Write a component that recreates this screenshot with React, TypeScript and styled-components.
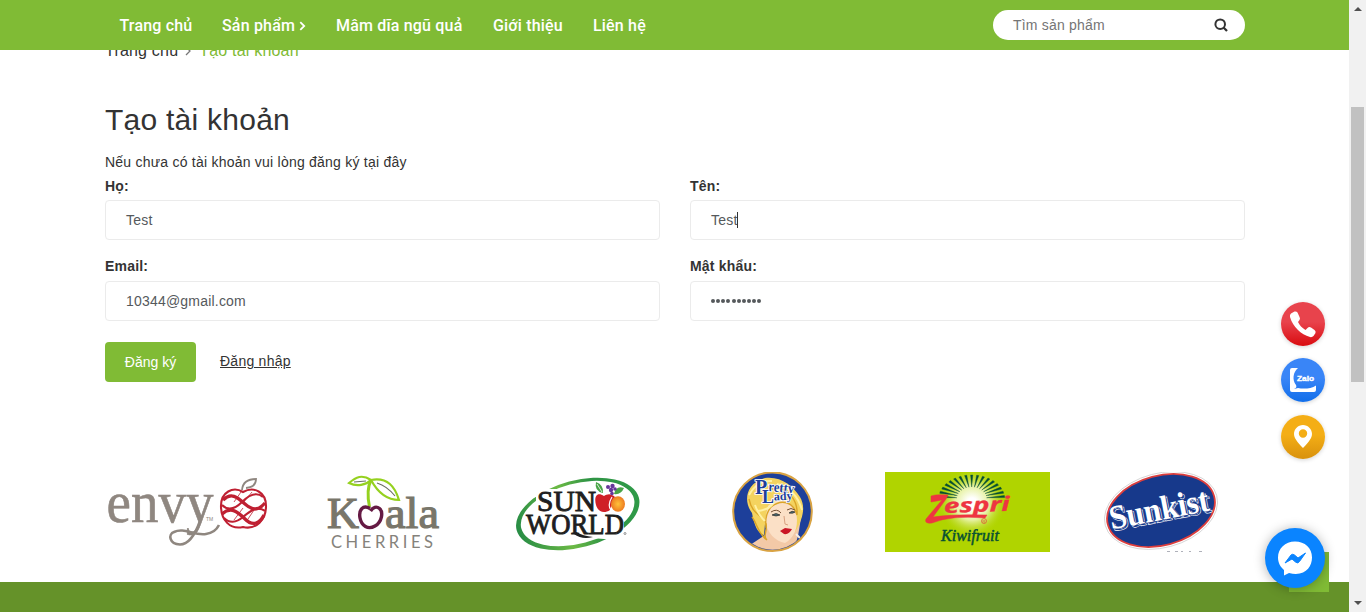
import React from "react";
import styled, { createGlobalStyle } from "styled-components";

const GREEN = "#80bb35";
const SANS = '"Liberation Sans", Arial, sans-serif';
const ROBOTO = 'Roboto, "Liberation Sans", sans-serif';
const SERIF = '"Liberation Serif", "Times New Roman", serif';

const GlobalStyle = createGlobalStyle`
  *, *::before, *::after { box-sizing: border-box; }
  body { margin: 0; overflow: hidden; background: #fff; color: #333; font-family: ${SANS}; font-size: 14px; }
  h1, p { margin: 0; }
  a { color: inherit; text-decoration: none; }
`;

const Window = styled.div`
  position: relative;
  display: flex;
  width: 1366px;
  height: 612px;
  overflow: hidden;
`;
const Page = styled.div`
  width: 1349px;
  height: 612px;
  display: flex;
  flex-direction: column;
`;
const Header = styled.header`
  position: relative;
  z-index: 2;
  flex: none;
  height: 50px;
  padding: 0 104px 0 105px;
  background: ${GREEN};
  display: flex;
  align-items: center;
  justify-content: space-between;
`;
const Nav = styled.nav`
  display: flex;
  gap: 30px;
  padding: 2px 0 0 14.5px;
`;
const NavLink = styled.a<{ $width: number }>`
  display: flex;
  align-items: center;
  gap: 4px;
  width: ${(p) => p.$width}px;
  color: #fff;
  font: 500 16px/48px ${ROBOTO};
  letter-spacing: 0.18px;
  white-space: nowrap;
`;
const Search = styled.form`
  width: 252px;
  height: 30px;
  padding: 0 17px 0 20px;
  border-radius: 15px;
  background: #fff;
  display: flex;
  align-items: center;
  justify-content: space-between;
`;
const SearchHint = styled.span`
  color: #757575;
  font-size: 14px;
  letter-spacing: 0.2px;
`;
const Main = styled.main`
  flex: none;
  width: 1140px;
  margin-left: 105px;
`;
const Breadcrumb = styled.div`
  display: flex;
  align-items: center;
  height: 20px;
  margin-top: -9px;
  font-size: 16px;
  line-height: 20px;
  letter-spacing: 0.2px;
`;
const Crumb = styled.span<{ $current?: boolean }>`
  color: ${(p) => (p.$current ? GREEN : "#333")};
`;
const CrumbArrow = styled.svg`
  margin: 0 8px 0 7px;
`;
const Title = styled.h1`
  margin-top: 39px;
  font-size: 30px;
  font-weight: 400;
  line-height: 40px;
  letter-spacing: 0.25px;
`;
const Intro = styled.p`
  margin-top: 12px;
  line-height: 20px;
  letter-spacing: 0.23px;
`;
const Fields = styled.div`
  display: grid;
  grid-template-columns: 555px 555px;
  column-gap: 30px;
  row-gap: 16px;
  margin-top: 4px;
`;
const Field = styled.div`
  display: flex;
  flex-direction: column;
`;
const Label = styled.label<{ $gap: number }>`
  height: 20px;
  margin-bottom: ${(p) => p.$gap}px;
  font-weight: 700;
  line-height: 20px;
  letter-spacing: 0.2px;
`;
const Box = styled.div`
  height: 40px;
  padding: 0 20px;
  border: 1px solid #ebebeb;
  border-radius: 4px;
  display: flex;
  align-items: center;
  color: #55595c;
  letter-spacing: 0.2px;
`;
const Caret = styled.span`
  width: 1px;
  height: 16px;
  margin-left: -0.3px;
  background: #333;
`;
const Dots = styled.span`
  display: flex;
  gap: 1.15px;
`;
const Dot = styled.i`
  width: 4px;
  height: 4px;
  border-radius: 50%;
  background: #55595c;
`;
const Actions = styled.div`
  display: flex;
  align-items: center;
  gap: 24px;
  margin-top: 21px;
`;
const Submit = styled.button`
  width: 91px;
  height: 40px;
  padding: 0;
  border: 0;
  border-radius: 4px;
  background: ${GREEN};
  color: #fff;
  font: 14px ${SANS};
`;
const Login = styled.a`
  margin-bottom: 2px;
  text-decoration: underline;
  line-height: 20px;
  letter-spacing: 0.25px;
`;
const Brands = styled.section`
  display: grid;
  grid-template-columns: repeat(6, 165px);
  column-gap: 30px;
  margin-top: 90px;
`;
const BrandArt = styled.svg`
  display: block;
  width: 165px;
  height: 80px;
`;
const Footer = styled.footer`
  flex: none;
  height: 30px;
  margin-top: 30px;
  background: #659229;
`;
const Scrollbar = styled.div`
  width: 17px;
  height: 612px;
  background: #f1f1f1;
  display: flex;
  flex-direction: column;
  align-items: center;
  justify-content: space-between;
  padding: 7px 0 4px;
`;
const Thumb = styled.div`
  width: 13px;
  height: 275px;
  margin: 96px 0 auto;
  background: #c1c1c1;
`;
const Contacts = styled.div`
  position: absolute;
  left: 1281px;
  top: 302px;
  z-index: 3;
  display: flex;
  flex-direction: column;
  gap: 12.4px;
`;
const Round = styled.a<{ $from: string; $to: string }>`
  width: 44px;
  height: 44px;
  border-radius: 50%;
  background: linear-gradient(${(p) => p.$from} 45%, ${(p) => p.$to});
  box-shadow: 0 1px 4px rgba(0, 0, 0, 0.18);
  display: flex;
`;
const ToTop = styled.div`
  position: absolute;
  left: 1289px;
  top: 552px;
  width: 40px;
  height: 40px;
  background: ${GREEN};
`;
const Messenger = styled.a`
  position: absolute;
  left: 1265px;
  top: 528px;
  width: 60px;
  height: 60px;
  border-radius: 50%;
  background: #0a84ff;
  box-shadow: 0 1px 12px rgba(0, 0, 0, 0.3);
`;

function Envy() {
  return (
    <BrandArt viewBox="0 0 165 80">
      <text x="1.5" y="49.5" fontFamily={SERIF} fontSize="60" fill="#8f8780" stroke="#8f8780" strokeWidth=".6" textLength="107" lengthAdjust="spacingAndGlyphs">envy</text>
      <path d="M95 49C90 63 84 72.500 75 72.500C64 72 63 62 69 60C79 55 89 64 101 62C108 61 112 57 114 53" fill="none" stroke="#8f8780" strokeWidth="2.6" />
      <text x="101" y="49" fontFamily={SANS} fontSize="5" fill="#8f8780">TM</text>
      <path d="M137 18Q138 7 151 7Q151 15 141 16" fill="none" stroke="#8f8780" strokeWidth="1.8" />
      <g fill="none" stroke="#bf2032">
        <path d="M138 20C128 14 116 20 116 34C116 48 125 58 138 55C151 58 161 48 161 34C161 20 149 14 138 20Z" strokeWidth="2.1" />
        <path d="M118 28C126 20 132 25 140 32C149 40 155 37 160 31M117 42C126 34 133 40 140 47C148 55 155 51 159 43" strokeWidth="3.3" />
        <path d="M158 25C151 19 143 24 137 30C129 38 122 38 117 33M160 39C152 33 144 40 138 45C131 51 124 51 119 46" strokeWidth="2.1" />
        <path d="M136 20L129 30M147 20L138 31M138 36L129 48M149 38L141 50" strokeWidth=".8" />
      </g>
    </BrandArt>
  );
}

function Koala() {
  return (
    <BrandArt viewBox="0 0 165 80">
      <g fontFamily={SERIF} fontSize="45" fill="#79766a" stroke="#79766a" strokeWidth="1.2">
        <text x="27" y="55.5" textLength="32" lengthAdjust="spacingAndGlyphs">K</text>
        <text x="85" y="55.5" textLength="54" lengthAdjust="spacingAndGlyphs">ala</text>
      </g>
      <g fill="none" stroke="#95d11f" strokeWidth="2.200">
        <path d="M71 8Q66 18 69.500 35" strokeWidth="3" />
        <path d="M71 8C62 2 56 5 49 11C57 15 66 13 71 8Z" />
        <path d="M71 8C88 5 95 15 99 28C86 28 77 19 71 8Z" />
      </g>
      <path d="M70 36.500C63 32 58.500 38 60 46C61.500 54 68 58 75 54C82 50 83.500 40 79.500 36.500C76.500 34 73 35 70.500 39" fill="none" stroke="#651a44" strokeWidth="3.4" />
      <path d="M54 10L66 9M77 11Q87 14 95 24" fill="none" stroke="#6c7065" strokeWidth="1.200" />
      <text x="31" y="75.800" fontFamily="Lato, sans-serif" fontWeight="400" fontSize="16.500" fill="#85827b" textLength="102">CHERRIES</text>
    </BrandArt>
  );
}

function SunWorld() {
  return (
    <BrandArt viewBox="0 0 165 80">
      <defs>
        <linearGradient id="ring" x1="0" x2="1">
          <stop offset="0" stopColor="#278c45" />
          <stop offset=".4" stopColor="#6cba45" />
          <stop offset=".65" stopColor="#2f9445" />
          <stop offset="1" stopColor="#2f9a48" />
        </linearGradient>
        <radialGradient id="orange"><stop offset="0" stopColor="#ffc13a" /><stop offset="1" stopColor="#ed7b20" /></radialGradient>
      </defs>
      <path fillRule="evenodd" transform="rotate(-15 82.700 42)" d="M19.500 42A63.200 33.500 0 1 0 146 42A63.200 33.500 0 1 0 19.500 42ZM24.500 41.500A58.200 30 0 1 1 141 41.500A58.200 30 0 1 1 24.500 41.500Z" fill="url(#ring)" />
      <path d="M31 28L41 17H101V40L129 42V62L122 68L96 66L36 64L29 43L41 40V25Z" fill="#fff" />
      <g fontFamily={SERIF} fill="#1e1e20" stroke="#1e1e20" strokeWidth=".9">
        <text x="42" y="39" fontSize="28.500" textLength="59" lengthAdjust="spacingAndGlyphs">SUN</text>
        <text x="31" y="62" fontSize="30" textLength="98" lengthAdjust="spacingAndGlyphs">WORLD</text>
      </g>
      <path d="M81 60Q88 64 98 65Q87 68 79 62Z" fill="#1e1e20" />
      <path d="M109 24C101 19 99 26 101 33C103 40 109 42 115 38L120 25C116 21 112 22 109 24Z" fill="#cf2027" />
      <ellipse cx="123" cy="32" rx="7" ry="7.800" fill="url(#orange)" />
      <path d="M117 25Q112 33 116 38" stroke="#fff" strokeWidth="1.200" fill="none" />
      <path d="M108 21Q99 19 101 10Q109 13 108 21M119 22Q121 13 129 16Q126 23 119 22" fill="#48a447" />
      <path d="M102 12L107 20" stroke="#fff" strokeWidth=".8" />
      <g fill="#65379a">
        <circle cx="113" cy="15" r="2" /><circle cx="117.500" cy="14" r="2.200" /><circle cx="116" cy="18" r="2.200" /><circle cx="120" cy="17" r="1.800" /><circle cx="117" cy="21.500" r="1.800" />
      </g>
      <circle cx="130" cy="61.500" r="1" fill="none" stroke="#333" strokeWidth=".5" />
    </BrandArt>
  );
}

function PrettyLady() {
  return (
    <BrandArt viewBox="0 0 165 80">
      <defs><clipPath id="disc"><circle cx="82.500" cy="39.700" r="38" /></clipPath></defs>
      <circle cx="82.500" cy="39.700" r="39.300" fill="#1d3f9a" stroke="#d9a343" strokeWidth="2" />
      <g clipPath="url(#disc)">
        <path d="M78 44L75 63Q69 67 57 75L76 84H102L108 64L112 40Z" fill="#f3c9a7" />
        <path d="M62 41C54 31 54 12 75 6C91 4 103 14 110 25C116 35 113 47 105 60L98 48L75 52L74 63C68 62 64 53 62 41Z" fill="#f4d35f" />
        <path d="M78 34C86 25 103 28 106 40C109 54 105 65 95 71C85 69 77 61 75 48Z" fill="#fbe0c6" />
        <path d="M59 27C62 43 73 43 76 51C78 60 72 64 77 68C68 62 67 51 62 45M82 17C100 14 108 31 107 43C103 29 91 27 81 35C76 41 75 48 76 56" fill="none" stroke="#dba528" strokeWidth="1.4" />
        <path d="M59 23Q67 8 82 9M87 12Q106 17 112 38M68 39Q82 37 84 29M65 33Q69 44 75 49" fill="none" stroke="#fff1a3" strokeWidth="2" />
        <path d="M81 40Q87 36 91 41M97 38Q101 35 105 38" fill="none" stroke="#765033" strokeWidth="1" />
        <path d="M82 43Q86 40 90 43Q86 45 82 43M99 41Q102 38 105 40Q103 42 99 41" fill="#4a6d76" stroke="#302c29" strokeWidth=".7" />
        <path d="M94 44L95 52L98 53" fill="none" stroke="#d7a080" strokeWidth="1" />
        <path d="M90 59L95 56L102 57Q99 63 94 62Z" fill="#ca1726" />
        <path d="M106 62L111 67" stroke="#f6eee6" strokeWidth="2" />
      </g>
      <g fontFamily={SERIF} fontWeight="bold" fill="#1d3f9a" stroke="#fff" strokeWidth="1.600" paintOrder="stroke">
        <text x="65" y="21.500" fontSize="20">P</text>
        <text x="78" y="19" fontSize="14" transform="rotate(5 78 19)" textLength="26" lengthAdjust="spacingAndGlyphs">retty</text>
        <text x="72" y="31" fontSize="18">L</text>
        <text x="84" y="28.500" fontSize="12" transform="rotate(-3 84 28)">ady</text>
      </g>
    </BrandArt>
  );
}

function Zespri() {
  const rays = Array.from({ length: 17 }, (_, i) => {
    const angle = ((174 - i * 10.5) * Math.PI) / 180;
    const c = Math.cos(angle);
    const s = Math.sin(angle);
    const x = 86.7 + c * 33;
    const y = 27 - s * 24;
    return `M${86.7 + c * 15} ${27 - s * 12}L${x - s * 1.1} ${y - c * 1.1}L${x + s * 1.1} ${y + c * 1.1}Z`;
  });
  return (
    <BrandArt viewBox="0 0 165 80">
      <defs><radialGradient id="glow"><stop offset=".15" stopColor="#fff" /><stop offset=".5" stopColor="#edf5b6" stopOpacity=".9" /><stop offset="1" stopColor="#b0d400" stopOpacity="0" /></radialGradient></defs>
      <rect width="165" height="80" fill="#b0d400" />
      <circle cx="87" cy="31" r="34" fill="url(#glow)" />
      <path d={rays.join("")} fill="#064e32" stroke="#064e32" strokeWidth=".4" />
      <g fill="#ee3541" stroke="#ee3541" fontFamily='"Open Sans", sans-serif' fontWeight="bold" fontStyle="italic">
        <path d="M46 24Q52 22 63 23L61 27L48 45Q67 42 102 43L100 46Q66 43 47 51Q39 52 41 47L57 28L46 30Z" strokeWidth=".5" />
        <text x="59" y="41" fontSize="20" strokeWidth=".3" transform="rotate(-2 61 42)" textLength="66" lengthAdjust="spacingAndGlyphs">espri</text>
      </g>
      <circle cx="99" cy="49" r="2.500" fill="none" stroke="#df5237" strokeWidth=".7" />
      <text x="97.500" y="50.500" fontFamily={SANS} fontSize="4" fill="#df5237">R</text>
      <text x="56" y="68.500" fontFamily={SERIF} fontStyle="italic" fontSize="17" fill="#075034" stroke="#075034" strokeWidth=".5" textLength="58" lengthAdjust="spacingAndGlyphs">Kiwifruit</text>
    </BrandArt>
  );
}

function Sunkist() {
  return (
    <BrandArt viewBox="0 0 165 80">
      <g transform="rotate(-15 81 38.500)">
        <ellipse cx="81" cy="38.500" rx="57.700" ry="37.200" fill="#fff" stroke="#c8c8ca" strokeWidth=".7" />
        <ellipse cx="81" cy="38.500" rx="55" ry="34.700" fill="#17398b" stroke="#dc3e3d" strokeWidth="1.800" />
      </g>
      <g transform="rotate(-11 32 58)" fontFamily={SERIF} fontWeight="bold" fontSize="34">
        <text x="33" y="59.500" fill="none" stroke="#fff" strokeWidth=".6" textLength="101" lengthAdjust="spacingAndGlyphs">Sunkist</text>
        <text x="31.500" y="57.500" fill="#fff" stroke="#17398b" strokeWidth="1" paintOrder="stroke" textLength="101" lengthAdjust="spacingAndGlyphs">Sunkist</text>
      </g>
      <path d="M87 79.500H90M95 79.500H98M101 79.500H103M109 79.500H111M119 79.500H122" stroke="#8d8f9c" strokeWidth=".7" />
    </BrandArt>
  );
}

const navItems = [
  { text: "Trang chủ", width: 72.5 },
  { text: "Sản phẩm", width: 84, arrow: true },
  { text: "Mâm dĩa ngũ quả", width: 127 },
  { text: "Giới thiệu", width: 70 },
  { text: "Liên hệ", width: 54 },
];

export default function App() {
  return (
    <Window>
      <GlobalStyle />
      <Page>
        <Header>
          <Nav>
            {navItems.map((item) => (
              <NavLink key={item.text} $width={item.width}>
                {item.text}
                {item.arrow && (
                  <svg width="7" height="10" viewBox="0 0 7 10"><path d="M1.300 1L5.300 5L1.300 9" fill="none" stroke="#fff" strokeWidth="1.800" /></svg>
                )}
              </NavLink>
            ))}
          </Nav>
          <Search>
            <SearchHint>Tìm sản phẩm</SearchHint>
            <svg width="14" height="14" viewBox="0 0 14 14"><circle cx="6.200" cy="6.200" r="4.800" fill="none" stroke="#333" strokeWidth="2" /><path d="M9.500 9.500L13 13" stroke="#333" strokeWidth="2.300" /></svg>
          </Search>
        </Header>
        <Main>
          <Breadcrumb>
            <Crumb>Trang chủ</Crumb>
            <CrumbArrow width="6" height="10" viewBox="0 0 6 10"><path d="M1 1L5 5L1 9" fill="none" stroke="#777" strokeWidth="1.300" /></CrumbArrow>
            <Crumb $current>Tạo tài khoản</Crumb>
          </Breadcrumb>
          <Title>Tạo tài khoản</Title>
          <Intro>Nếu chưa có tài khoản vui lòng đăng ký tại đây</Intro>
          <Fields>
            <Field><Label $gap={4}>Họ:</Label><Box>Test</Box></Field>
            <Field><Label $gap={4}>Tên:</Label><Box>Test<Caret /></Box></Field>
            <Field><Label $gap={5}>Email:</Label><Box>10344@gmail.com</Box></Field>
            <Field>
              <Label $gap={5}>Mật khẩu:</Label>
              <Box><Dots>{Array.from({ length: 10 }, (_, i) => <Dot key={i} />)}</Dots></Box>
            </Field>
          </Fields>
          <Actions>
            <Submit type="button">Đăng ký</Submit>
            <Login>Đăng nhập</Login>
          </Actions>
          <Brands>
            <Envy /><Koala /><SunWorld /><PrettyLady /><Zespri /><Sunkist />
          </Brands>
        </Main>
        <Footer />
      </Page>
      <Scrollbar>
        <svg width="8" height="4" viewBox="0 0 8 4"><path d="M0 4L4 0L8 4Z" fill="#505050" /></svg>
        <Thumb />
        <svg width="8" height="8" viewBox="0 0 8 8"><path d="M0 1L4 5L8 1Z" fill="#505050" /></svg>
      </Scrollbar>
      <Contacts>
        <Round $from="#e8434c" $to="#d90b10">
          <svg width="44" height="44" viewBox="0 0 44 44"><path d="M13.500 9.500L10 11.500Q8.500 12.500 9 15C12 25 20 32.500 29 35Q31 35.500 32.500 34L34.500 31Q35 29 33.500 28L30 25.500Q28 24.500 26.500 26L24.500 28C21 26 18.500 23 17 20L18.500 18Q19.500 16.500 18.500 15L16.500 10.500Q15.500 9 13.500 9.500Z" fill="#fff" /></svg>
        </Round>
        <Round $from="#3985f7" $to="#116eea">
          <svg width="44" height="44" viewBox="0 0 44 44">
            <path d="M17 10H11Q9 10 9 12V32Q9 34 11 34H33Q35 34 35 32V27.500C30 31 22 31 17 30L13 31C15 30 16 29 15 27C11 22 12 14 17 10Z" fill="#fff" />
            <text x="16" y="23" fontFamily={SANS} fontSize="8" fontWeight="bold" fill="#fff" stroke="#fff" strokeWidth=".4" textLength="17" lengthAdjust="spacingAndGlyphs">Zalo</text>
          </svg>
        </Round>
        <Round $from="#f4ae16" $to="#d8910d">
          <svg width="44" height="44" viewBox="0 0 44 44"><path fillRule="evenodd" d="M22 10C17 10 13 14 13 19C13 24 19 30 22 33C25 30 31 24 31 19C31 14 27 10 22 10ZM22 14.300A4.200 4.200 0 1 1 22 22.700A4.200 4.200 0 1 1 22 14.300Z" fill="#fff" /></svg>
        </Round>
      </Contacts>
      <ToTop />
      <Messenger>
        <svg width="60" height="60" viewBox="0 0 60 60">
          <path d="M30 13.500C20 13.500 13 20.500 13 29.500C13 35 15.500 39 19 42V47.500L24 45C40 49 47 39 47 29.500C47 20 40 13.500 30 13.500Z" fill="#fff" />
          <path d="M20 35L26 27Q27.500 25.500 29.500 27L33 30L40.500 25L34.500 33.500Q33 36 30.500 34L27 31Z" fill="#0a84ff" stroke="#0a84ff" />
        </svg>
      </Messenger>
    </Window>
  );
}
